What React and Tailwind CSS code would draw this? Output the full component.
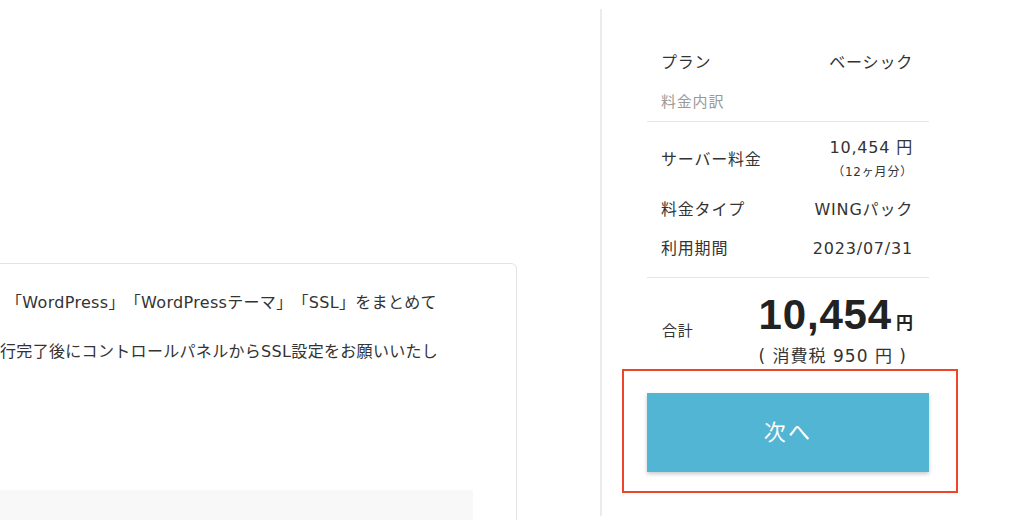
import React from 'react';

const rows = [
  { label: '料金タイプ', value: 'WINGパック', gap: 'mt-[14px]' },
  { label: '利用期間', value: '2023/07/31', gap: 'mt-[15px]' },
];

export default function App() {
  return (
    <div className="w-[1024px] h-[520px] overflow-hidden bg-white flex text-[#333] [text-spacing-trim:space-all] font-['DejaVu_Sans','Noto_Sans_CJK_JP',sans-serif]">
      {/* 左: 説明カード */}
      <div className="w-[600px] shrink-0 pt-[263px]">
        <div className="-ml-[60px] w-[577px] h-[300px] border border-[#e3e3e3] rounded-[6px] pl-[40px] pr-[43px] pt-[27px]">
          <p className="pl-[25px] text-[16px] leading-[24px] tracking-[0.02em] whitespace-nowrap">
            「WordPress」「WordPressテーマ」「SSL」をまとめて
          </p>
          <p className="pl-[19px] mt-[25px] text-[16px] leading-[24px] tracking-[0.02em] whitespace-nowrap">
            行完了後にコントロールパネルからSSL設定をお願いいたし
          </p>
          <div className="mt-[126px] h-[40px] bg-[#f8f8f8]" />
        </div>
      </div>

      {/* 区切り線 */}
      <div className="w-[2px] shrink-0 mt-[9px] h-[507px] bg-[#ebebeb]" />

      {/* 右: 料金サマリー */}
      <div className="pl-[45px] pt-[51px] text-[16px] tracking-[0.05em]">
        <div className="w-[282px]">
          <div className="border-b border-[#e6e6e6] pb-[7px]">
            <div className="flex justify-between pl-[14px] pr-[16px] leading-[24px]">
              <span>プラン</span>
              <span>ベーシック</span>
            </div>
            <div className="mt-[15px] pl-[14px] leading-[24px] text-[15px] text-[#999]">料金内訳</div>
          </div>

          <div className="border-b border-[#e6e6e6] pt-[14px] pb-[16px] pl-[14px] pr-[16px]">
            <div className="flex items-center justify-between">
              <span className="leading-[24px]">サーバー料金</span>
              <div className="text-right">
                <div className="leading-[24px]">10,454 円</div>
                <div className="leading-[24px] text-[12px]">（12ヶ月分）</div>
              </div>
            </div>
            {rows.map((row) => (
              <div key={row.label} className={`flex justify-between leading-[24px] ${row.gap}`}>
                <span>{row.label}</span>
                <span>{row.value}</span>
              </div>
            ))}
          </div>

          <div className="flex items-center justify-between pt-[16px] pl-[15px] pr-[16px]">
            <span className="text-[15px] leading-[24px]">合計</span>
            <div className="text-right">
              <div className="flex items-baseline justify-end text-[#222] font-bold">
                <span className="text-[42px] leading-[42px] tracking-[0.02em] font-['Liberation_Sans',sans-serif]">10,454</span>
                <span className="ml-[4px] text-[17px] leading-[42px] tracking-normal font-['Noto_Sans_CJK_JP',sans-serif]">円</span>
              </div>
              <div className="mt-[1px] pr-[6px] text-[17px] leading-[24px] tracking-[0.06em]">( 消費税 950 円 )</div>
            </div>
          </div>

          <div className="mt-[1px] -ml-[25px] w-[336px] border-2 border-[#ee4528] pt-[22px] pl-[23px] pb-[19px]">
            <button className="w-[282px] h-[79px] bg-[#52b5d3] text-white text-[22px] tracking-[0.1em] shadow-[0_2px_4px_rgba(0,0,0,0.22)]">
              次へ
            </button>
          </div>
        </div>
      </div>
    </div>
  );
}
